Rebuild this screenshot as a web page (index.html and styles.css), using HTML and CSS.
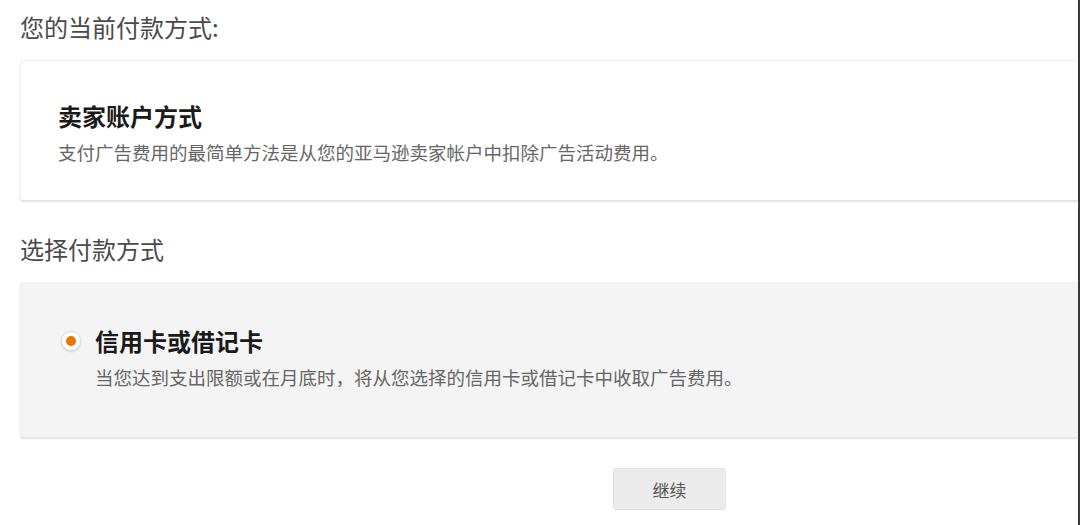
FILE: index.html
```html
<!DOCTYPE html>
<html lang="zh-CN">
<head>
<meta charset="utf-8">
<link rel="stylesheet" href="styles.css">
</head>
<body>
<div class="page">
  <h2 class="section-title first">您的当前付款方式:</h2>
  <div class="card current">
    <div class="card-title">卖家账户方式</div>
    <div class="card-desc">支付广告费用的最简单方法是从您的亚马逊卖家帐户中扣除广告活动费用。</div>
  </div>

  <h2 class="section-title second">选择付款方式</h2>
  <div class="card option">
    <span class="radio"><span class="dot"></span></span>
    <div class="option-body">
      <div class="card-title">信用卡或借记卡</div>
      <div class="card-desc">当您达到支出限额或在月底时，将从您选择的信用卡或借记卡中收取广告费用。</div>
    </div>
  </div>

  <div class="actions">
    <button class="btn">继续</button>
  </div>
</div>
</body>
</html>
```

FILE: styles.css
```css
* { box-sizing: border-box; }
html, body {
  margin: 0;
  padding: 0;
  background: #ffffff;
}
body {
  font-family: "Noto Sans CJK SC", "Noto Sans", sans-serif;
  width: 1080px;
  height: 525px;
  overflow: hidden;
}
.page {
  height: 525px;
  padding-left: 20px;
  border-right: 2px solid #3a3a3a;
}
.section-title {
  margin: 0;
  font-size: 24px;
  line-height: 32px;
  font-weight: 400;
  color: #4a4a4a;
}
.section-title.first {
  padding-top: 11px;
  margin-bottom: 17px;
}
.section-title.second {
  margin-top: 33px;
  margin-bottom: 17px;
}
.card {
  border-top: 1px solid #f2f2f2;
  border-left: 1px solid #f2f2f2;
  border-radius: 3px 0 0 3px;
  box-shadow: 0 2px 2px rgba(0, 0, 0, 0.12);
}
.card.current {
  background: #ffffff;
  height: 140px;
  padding: 39px 0 0 37px;
}
.card.option {
  background: #f4f4f4;
  height: 155px;
  padding: 42px 0 0 40px;
  display: flex;
  align-items: flex-start;
  gap: 14px;
}
.card-title {
  font-size: 24px;
  line-height: 32px;
  font-weight: 700;
  color: #1a1a1a;
}
.card-desc {
  margin-top: 7px;
  font-size: 18.5px;
  line-height: 26px;
  color: #666666;
}
.radio {
  flex: none;
  width: 20px;
  height: 20px;
  margin-top: 6px;
  border-radius: 50%;
  background: #ffffff;
  border: 1px solid #dcdcdc;
  box-shadow: 0 1px 2px rgba(0, 0, 0, 0.15);
  display: flex;
  align-items: center;
  justify-content: center;
}
.dot {
  width: 10px;
  height: 10px;
  border-radius: 50%;
  background: #e77600;
}
.actions {
  padding-top: 31px;
  padding-left: 593px;
}
.btn {
  width: 113px;
  height: 42px;
  border: 1px solid #e2e2e2;
  border-radius: 3px;
  background: #ebebeb;
  color: #555555;
  font-family: "Noto Sans CJK SC", "Noto Sans", sans-serif;
  font-size: 17px;
  padding: 0;
}
```
